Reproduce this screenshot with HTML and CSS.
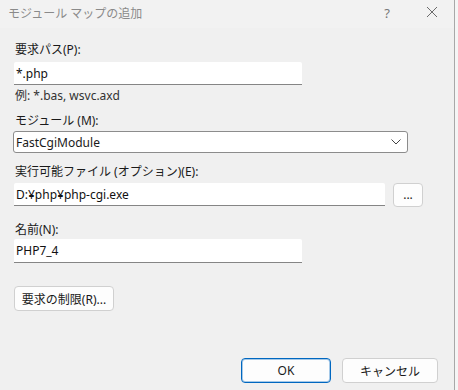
FILE: index.html
```html
<!DOCTYPE html>
<html lang="ja">
<head>
  <meta charset="UTF-8">
  <title>モジュール マップの追加</title>
  <link rel="stylesheet" href="styles.css">
</head>
<body>
  <div class="screen">
    <div class="window">
      <div class="titlebar">
        <span class="title">モジュール マップの追加</span>
        <span class="help">?</span>
        <span class="close">
          <svg width="12" height="12" viewBox="0 0 12 12"><path d="M1 1 L11 11 M11 1 L1 11" stroke="#6b6b6b" stroke-width="1"/></svg>
        </span>
      </div>

      <div class="content">
        <label class="label first">要求パス(P):</label>
        <div class="textbox short">*.php</div>
        <div class="hint">例: *.bas, wsvc.axd</div>

        <label class="label module">モジュール (M):</label>
        <div class="select">
          <span>FastCgiModule</span>
          <svg width="10" height="6" viewBox="0 0 10 6"><path d="M0.5 0.5 L5 5 L9.5 0.5" fill="none" stroke="#444" stroke-width="1"/></svg>
        </div>

        <label class="label exe">実行可能ファイル (オプション)(E):</label>
        <div class="row">
          <div class="textbox wide">D:¥php¥php-cgi.exe</div>
          <button class="btn browse">...</button>
        </div>

        <label class="label name">名前(N):</label>
        <div class="textbox short tall">PHP7_4</div>

        <button class="btn limits">要求の制限(R)...</button>
      </div>

      <div class="footer">
        <button class="btn ok">OK</button>
        <button class="btn cancel">キャンセル</button>
      </div>
    </div>
    <div class="edge"></div>
  </div>
</body>
</html>
```

FILE: styles.css
```css
body {
  margin: 0;
  font-family: "Segoe UI", "Noto Sans", "Noto Sans CJK JP", sans-serif;
  font-size: 12px;
  color: #1a1a1a;
  background: #f3f3f3;
}

.screen {
  display: flex;
  height: 390px;
  overflow: hidden;
}

.window {
  width: 454px;
  height: 390px;
  background: #f0f0f0;
  border-right: 1px solid #a8a8a8;
  display: flex;
  flex-direction: column;
}

.edge {
  flex: 1;
  background: #f5f5f5;
}

.titlebar {
  height: 28px;
  display: flex;
  align-items: center;
  background: #f2f2f2;
  color: #8a8a8a;
  padding-left: 8px;
}

.title {
  flex: 1;
  margin-top: -2px;
}

.help {
  color: #777;
  font-size: 13px;
  margin-right: 36px;
  margin-top: -2px;
}

.close {
  width: 12px;
  height: 12px;
  margin-right: 16px;
  margin-top: -4px;
}

.close svg {
  display: block;
}

.content {
  display: flex;
  flex-direction: column;
  align-items: flex-start;
  padding-left: 14px;
  flex: 1;
}

.label {
  line-height: 16px;
  padding-left: 1px;
}

.label.first {
  margin-top: 14px;
}

.label.module {
  margin-top: 9px;
}

.label.exe {
  margin-top: 11px;
}

.label.name {
  margin-top: 15px;
}

.textbox {
  line-height: 23px;
  background: #ffffff;
  border-bottom: 1px solid #858585;
  border-radius: 2px 2px 0 0;
  padding-left: 2px;
  box-sizing: border-box;
  height: 23px;
  margin-top: 4px;
  color: #111;
}

.textbox.short {
  width: 288px;
}

.textbox.tall {
  height: 24px;
  margin-top: 1px;
}

.textbox.wide {
  width: 371px;
  margin-top: 0;
}

.hint {
  line-height: 16px;
  margin-top: 3px;
  padding-left: 1px;
  color: #333;
}

.select {
  width: 395px;
  height: 22px;
  margin-top: 2px;
  margin-left: -1px;
  box-sizing: border-box;
  border: 1px solid #8c8c8c;
  border-radius: 3px;
  background: #ffffff;
  display: flex;
  align-items: center;
  justify-content: space-between;
  padding: 0 6px 0 2px;
}

.row {
  display: flex;
  align-items: flex-start;
  margin-top: 3px;
  gap: 8px;
}

.btn {
  font-family: inherit;
  font-size: 12px;
  color: #1a1a1a;
  background: #fdfdfd;
  border: 1px solid #d0d0d0;
  border-radius: 4px;
  padding: 0;
  box-sizing: border-box;
}

.browse {
  width: 30px;
  height: 24px;
  line-height: 18px;
}

.limits {
  width: 100px;
  height: 25px;
  margin-top: 23px;
}

.footer {
  display: flex;
  justify-content: flex-end;
  gap: 11px;
  padding: 0 16px 7px 0;
}

.ok {
  width: 90px;
  height: 25px;
  border: 1px solid #0067c0;
  box-shadow: inset 0 0 0 1px rgba(0, 103, 192, 0.35);
}

.cancel {
  width: 96px;
  height: 25px;
}
```
